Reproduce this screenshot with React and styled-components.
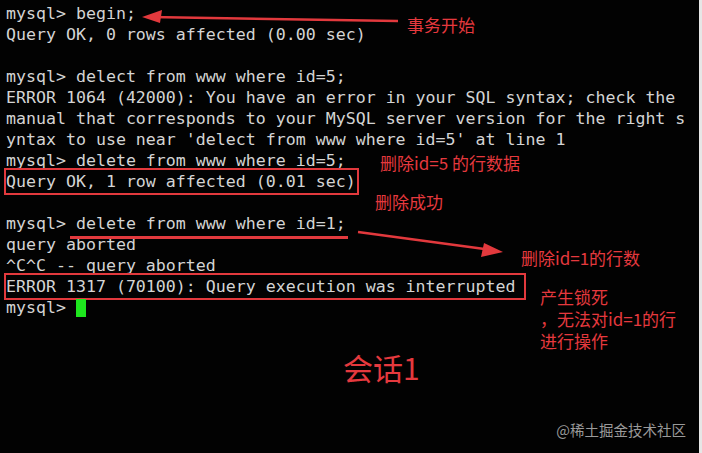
import React from "react";
import styled, { createGlobalStyle } from "styled-components";

const GlobalStyle = createGlobalStyle`
  html, body {
    margin: 0;
    padding: 0;
    background: #000;
  }
`;

const Screen = styled.div`
  position: relative;
  width: 702px;
  height: 453px;
  background: #020202;
  border-right: 3px solid #e6e6e6;
  box-sizing: border-box;
  overflow: hidden;
`;

const Terminal = styled.pre`
  margin: 0;
  padding: 3px 0 0 6px;
  font-family: "DejaVu Sans Mono", "Liberation Mono", monospace;
  font-size: 16.6px;
  line-height: 21px;
  color: #d4d4d4;
  white-space: pre;
`;

const Line = styled.div`
  height: 21px;
  display: flex;
  align-items: center;
`;

const Framed = styled.span`
  display: inline-flex;
  align-items: center;
  height: 27px;
  margin-left: -2px;
  padding: 0 ${(p) => p.pad}px 0 0;
  border: 2.5px solid #e2393d;
  box-sizing: border-box;
`;

const Marked = styled.span`
  position: relative;
  padding-left: 6px;
  margin-left: -6px;

  &::after {
    content: "";
    position: absolute;
    left: 0;
    right: -2px;
    bottom: -5px;
    height: 3px;
    background: #e2393d;
  }
`;

const Cursor = styled.span`
  display: inline-block;
  width: 10px;
  height: 18px;
  background: #1ee61e;
`;

const Note = styled.div`
  position: absolute;
  left: ${(p) => p.x}px;
  top: ${(p) => p.y}px;
  font-family: "Noto Sans CJK SC", "Noto Sans", sans-serif;
  font-size: ${(p) => p.size || 17}px;
  line-height: ${(p) => (p.size ? p.size + 4 : 22)}px;
  color: #e5393e;
  white-space: pre;
`;

const Watermark = styled.div`
  position: absolute;
  right: 13px;
  bottom: 13px;
  font-family: "Noto Sans CJK SC", "Noto Sans", sans-serif;
  font-size: 14.5px;
  color: #9a9a9a;
`;

const Arrows = styled.svg`
  position: absolute;
  left: 0;
  top: 0;
`;

export default function App() {
  return (
    <>
      <GlobalStyle />
      <Screen>
        <Terminal>
          <Line>mysql&gt; begin;</Line>
          <Line>Query OK, 0 rows affected (0.00 sec)</Line>
          <Line> </Line>
          <Line>mysql&gt; delect from www where id=5;</Line>
          <Line>ERROR 1064 (42000): You have an error in your SQL syntax; check the</Line>
          <Line>manual that corresponds to your MySQL server version for the right s</Line>
          <Line>yntax to use near 'delect from www where id=5' at line 1</Line>
          <Line>mysql&gt; delete from www where id=5;</Line>
          <Line>
            <Framed pad={1}>Query OK, 1 row affected (0.01 sec)</Framed>
          </Line>
          <Line> </Line>
          <Line>
            {"mysql> "}
            <Marked>delete from www where id=1;</Marked>
          </Line>
          <Line>query aborted</Line>
          <Line>^C^C -- query aborted</Line>
          <Line>
            <Framed pad={8}>ERROR 1317 (70100): Query execution was interrupted</Framed>
          </Line>
          <Line>
            {"mysql> "}
            <Cursor />
          </Line>
        </Terminal>

        <Arrows width="702" height="453">
          <g stroke="#e2393d" strokeWidth="2.5" fill="#e2393d">
            <line x1="398" y1="21" x2="150" y2="17" />
            <polygon points="142,17 162,10 160,23" stroke="none" />
            <line x1="358" y1="232" x2="492" y2="250" />
            <polygon points="503,252 484,243 481,257" stroke="none" />
          </g>
        </Arrows>

        <Note x={407} y={14}>事务开始</Note>
        <Note x={380} y={152}>删除id=5 的行数据</Note>
        <Note x={375} y={191}>删除成功</Note>
        <Note x={521} y={247}>删除id=1的行数</Note>
        <Note x={540} y={286}>
          {"产生锁死\n，无法对id=1的行\n进行操作"}
        </Note>
        <Note x={343} y={350} size={30}>会话1</Note>

        <Watermark>@稀土掘金技术社区</Watermark>
      </Screen>
    </>
  );
}
